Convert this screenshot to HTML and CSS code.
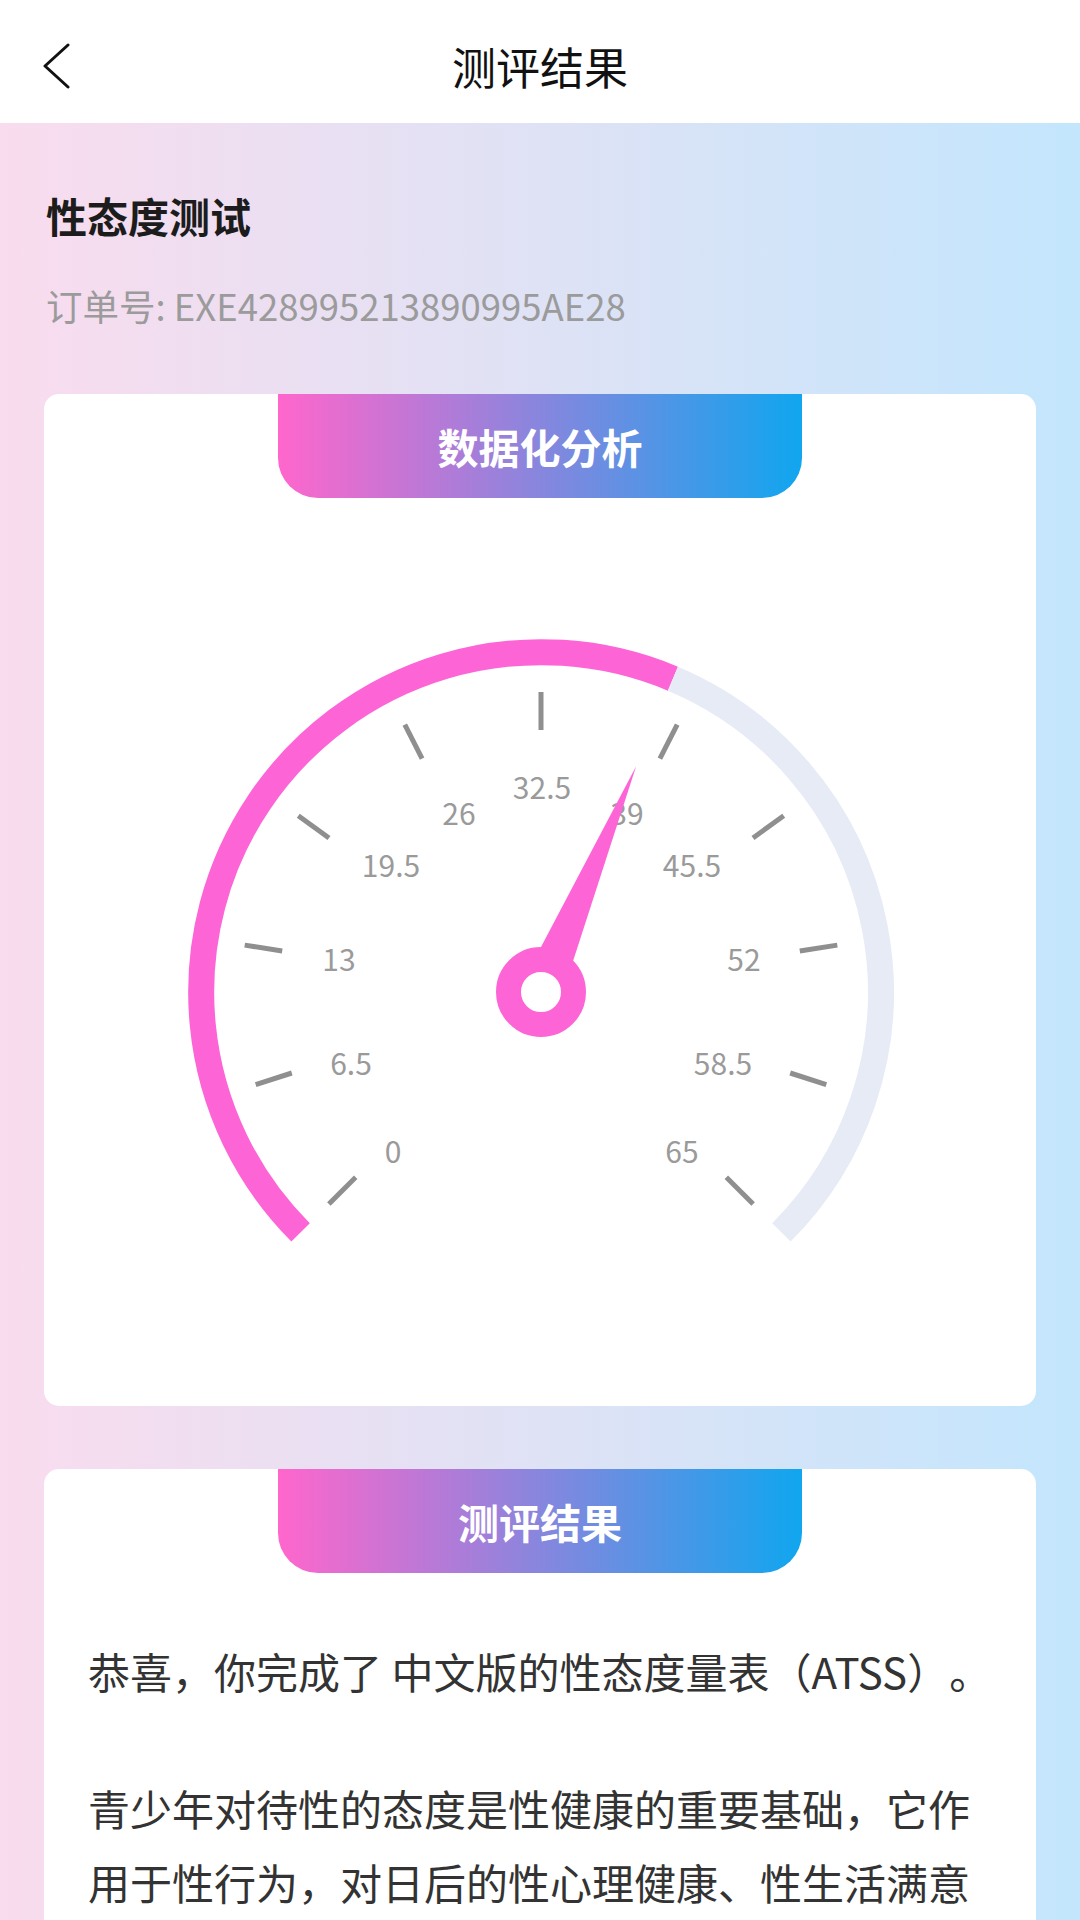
FILE: index.html
```html
<!DOCTYPE html>
<html lang="zh-CN">

<head>
    <meta charset="UTF-8">
    <meta name="viewport" content="width=device-width, initial-scale=1.0">
    <title>测评结果</title>
    <link rel="stylesheet" href="styles.css">
</head>

<body>
    <div class="nav">
        <div class="back">
            <svg width="30" height="46" viewBox="0 0 30 46">
                <polyline points="26,2 3,23 26,44" fill="none" stroke="#111" stroke-width="3" stroke-linecap="round" stroke-linejoin="round" />
            </svg>
        </div>
        <h1 class="nav-title">测评结果</h1>
        <div></div>
    </div>

    <div class="page">
        <div class="info">
            <h2 class="test-name">性态度测试</h2>
            <p class="order-no">订单号: EXE428995213890995AE28</p>
        </div>

        <div class="card">
            <div class="tab">数据化分析</div>
            <svg class="gauge" width="994" height="908" viewBox="-497 -494 994 908">
                <!-- 表盘 -->
                <path d="M -240.4 240.4 A 340 340 0 0 1 131.9 -313.3" fill="none" stroke="#fd65d6" stroke-width="26" />
                <path d="M 131.9 -313.3 A 340 340 0 0 1 240.4 240.4" fill="none" stroke="#e6ebf6" stroke-width="26" />
                <!-- 刻度 -->
                <g stroke="#8f8f8f" stroke-width="5">
                    <line x1="-185.3" y1="185.3" x2="-212.1" y2="212.1" />
                    <line x1="-249.2" y1="81" x2="-285.3" y2="92.7" />
                    <line x1="-258.8" y1="-41" x2="-296.3" y2="-46.9" />
                    <line x1="-212" y1="-154" x2="-242.7" y2="-176.3" />
                    <line x1="-118.9" y1="-233.4" x2="-136.2" y2="-267.3" />
                    <line x1="0" y1="-262" x2="0" y2="-300" />
                    <line x1="118.9" y1="-233.4" x2="136.2" y2="-267.3" />
                    <line x1="212" y1="-154" x2="242.7" y2="-176.3" />
                    <line x1="258.8" y1="-41" x2="296.3" y2="-46.9" />
                    <line x1="249.2" y1="81" x2="285.3" y2="92.7" />
                    <line x1="185.3" y1="185.3" x2="212.1" y2="212.1" />
                </g>
                <g class="gauge-label">
                    <text x="-148" y="158">0</text>
                    <text x="-190" y="70">6.5</text>
                    <text x="-202" y="-34">13</text>
                    <text x="-150" y="-128">19.5</text>
                    <text x="-82" y="-180">26</text>
                    <text x="1" y="-206">32.5</text>
                    <text x="86" y="-180">39</text>
                    <text x="151" y="-128">45.5</text>
                    <text x="203" y="-34">52</text>
                    <text x="182" y="70">58.5</text>
                    <text x="141" y="158">65</text>
                </g>
                <!-- 指针 -->
                <polygon points="-21,0 21,0 0,-245" fill="#fd65d6" transform="rotate(22.85)" />
                <circle cx="0" cy="0" r="32.5" fill="#fff" stroke="#fd65d6" stroke-width="25" />
            </svg>
        </div>

        <div class="card card-result">
            <div class="tab">测评结果</div>
            <div class="result">
                <p>恭喜，你完成了 中文版的性态度量表（ATSS）。</p>
                <p>青少年对待性的态度是性健康的重要基础，它作用于性行为，对日后的性心理健康、性生活满意</p>
            </div>
        </div>
    </div>
</body>

</html>
```

FILE: styles.css
```css
* {
    padding: 0;
    margin: 0;
    box-sizing: border-box;
}

html,
body {
    height: 1920px;
    overflow: hidden;
}

body {
    font-family: "Noto Sans CJK SC", "Noto Sans", sans-serif;
    background: linear-gradient(90deg, #f9dcee, #dfe2f5 50%, #c3e6fd);
    color: #333;
}

.nav {
    height: 123px;
    padding-top: 9px;
    background-color: #fff;
    display: grid;
    grid-template-columns: 1fr auto 1fr;
    align-items: center;
}

.back {
    padding-left: 42px;
    display: flex;
    align-items: center;
}

.back svg {
    display: block;
}

.nav-title {
    font-size: 44px;
    font-weight: normal;
    color: #111;
    line-height: 60px;
}

.page {
    padding: 0 44px;
}

.info {
    padding: 63px 2px 0;
}

.test-name {
    font-size: 41px;
    line-height: 58px;
    font-weight: bold;
    color: #1c1c1c;
}

.order-no {
    margin-top: 38px;
    font-size: 36.5px;
    line-height: 48px;
    color: #9b9b9b;
}

.card {
    margin-top: 64px;
    background-color: #fff;
    border-radius: 15px;
    overflow: hidden;
}

.tab {
    width: 524px;
    height: 104px;
    margin: 0 auto;
    border-radius: 0 0 40px 40px;
    background: linear-gradient(90deg, #ff66cc, #10a6ef);
    color: #fff;
    font-size: 41px;
    font-weight: bold;
    text-align: center;
    line-height: 104px;
}

.gauge {
    display: block;
}

.gauge-label text {
    font-family: "Noto Sans CJK SC", "Noto Sans", sans-serif;
    font-size: 30px;
    fill: #9a9a9a;
    text-anchor: middle;
    dominant-baseline: central;
}

.card-result {
    margin-top: 63px;
    min-height: 451px;
    border-radius: 15px 15px 0 0;
}

.result {
    padding: 61px 36px 0 44px;
}

.result p {
    font-size: 42px;
    line-height: 74px;
    color: #333;
    text-spacing-trim: space-all;
}

.result p + p {
    margin-top: 63px;
}
```
